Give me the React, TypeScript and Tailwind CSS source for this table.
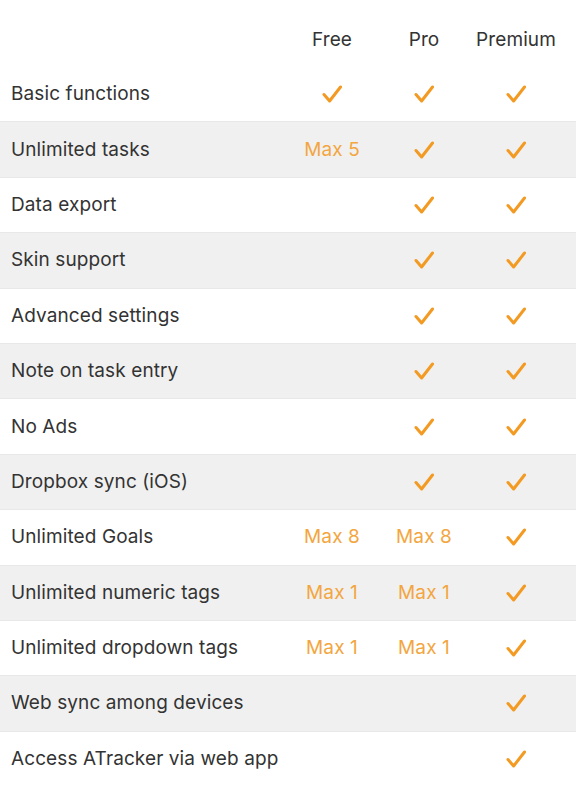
import React from "react";

type Cell = "check" | string | null;
type Row = { label: string; free: Cell; pro: Cell; premium: Cell };

const ROWS: Row[] = [
  { label: "Basic functions", free: "check", pro: "check", premium: "check" },
  { label: "Unlimited tasks", free: "Max 5", pro: "check", premium: "check" },
  { label: "Data export", free: null, pro: "check", premium: "check" },
  { label: "Skin support", free: null, pro: "check", premium: "check" },
  { label: "Advanced settings", free: null, pro: "check", premium: "check" },
  { label: "Note on task entry", free: null, pro: "check", premium: "check" },
  { label: "No Ads", free: null, pro: "check", premium: "check" },
  { label: "Dropbox sync (iOS)", free: null, pro: "check", premium: "check" },
  { label: "Unlimited Goals", free: "Max 8", pro: "Max 8", premium: "check" },
  { label: "Unlimited numeric tags", free: "Max 1", pro: "Max 1", premium: "check" },
  { label: "Unlimited dropdown tags", free: "Max 1", pro: "Max 1", premium: "check" },
  { label: "Web sync among devices", free: null, pro: null, premium: "check" },
  { label: "Access ATracker via web app", free: null, pro: null, premium: "check" },
];

function Check() {
  return (
    <svg width="20" height="18" viewBox="0 0 20 18" fill="none">
      <path d="M2 9.5 L7.6 16 L18.5 2" stroke="#f39a22" strokeWidth="3" strokeLinecap="round" strokeLinejoin="round" />
    </svg>
  );
}

function Value({ v }: { v: Cell }) {
  if (!v) return <div />;
  return (
    <div className="flex items-center justify-center">
      {v === "check" ? <Check /> : <span className="text-[#f3a640]">{v}</span>}
    </div>
  );
}

export default function App() {
  return (
    <div
      className="min-h-[806px] bg-white text-[19px] leading-[24px] tracking-[0.1px] text-[#333]"
      style={{ fontFamily: "Inter, 'Noto Sans', sans-serif" }}
    >
      <div className="grid h-[67px] grid-cols-[286px_92px_92px_92px] items-start pt-[28px]">
        <div />
        <div className="text-center">Free</div>
        <div className="text-center">Pro</div>
        <div className="text-center">Premium</div>
      </div>
      {ROWS.map((r, i) => (
        <div
          key={r.label}
          className={`grid h-[55.4px] grid-cols-[286px_92px_92px_92px] items-center ${i < ROWS.length - 1 ? "border-b border-[#e8e8e8]" : ""} ${i % 2 ? "bg-[#f0f0f0]" : "bg-white"}`}
        >
          <div className="pl-[11px]">{r.label}</div>
          <Value v={r.free} />
          <Value v={r.pro} />
          <Value v={r.premium} />
        </div>
      ))}
    </div>
  );
}
